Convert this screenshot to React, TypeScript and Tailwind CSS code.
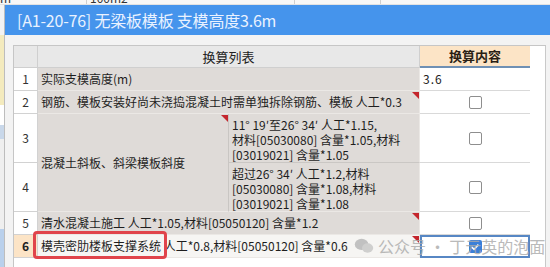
import React from "react";

// 换算列表 rows
const SUB3 = ["11° 19′至26° 34′ 人工*1.15,", "材料[05030080] 含量*1.05,材料", "[03019021] 含量*1.05"];
const SUB4 = ["超过26° 34′ 人工*1.2,材料", "[05030080] 含量*1.08,材料", "[03019021] 含量*1.08"];

function Flag() {
  return (
    <svg viewBox="0 0 7 7" className="absolute right-0 top-[1px] w-[7px] h-[7px]">
      <polygon points="0,0 7,0 7,7" fill="#c4262d" />
    </svg>
  );
}

function Box({ checked }: { checked?: boolean }) {
  if (checked)
    return (
      <span className="w-[13px] h-[13px] rounded-[2px] bg-[#3b7fd8] grid place-items-center">
        <svg viewBox="0 0 10 10" className="w-[10px] h-[10px]">
          <path d="M1.8 5.2 4.1 7.4 8.4 2.6" stroke="white" strokeWidth="1.6" fill="none" />
        </svg>
      </span>
    );
  return <span className="w-[13px] h-[13px] rounded-[2px] border border-[#8e8e8e] bg-white" />;
}

const num = "border-r border-b border-[#d2d2d2] bg-white flex items-center justify-center text-[12px] text-[#333]";
const txt = "relative border-r border-b border-[#ebe8e5] bg-[#dfdbd8] flex items-center pl-[3px] text-[12px] text-[#1e1e1e] whitespace-nowrap";
const val = "border-b border-[#d9d9d9] bg-white flex items-center justify-center";

export default function App() {
  return (
    <div className="relative w-[550px] h-[267px] overflow-hidden bg-white flex flex-col font-['Noto_Sans_CJK_SC','Microsoft_YaHei',sans-serif]">
      {/* window behind */}
      <div className="h-[5px] flex bg-[#f7f7f7] border-b border-[#e2e2e2] text-[12px] leading-[12px] text-[#333] overflow-hidden">
        <div className="w-[87px] border-r border-[#cfcfcf] -mt-[8px]">m</div>
        <div className="w-[208px] border-r border-[#cfcfcf] pl-[3px] -mt-[8px]">100m2</div>
        <div className="w-[86px] border-r border-[#cfcfcf]" />
      </div>
      <div className="flex flex-1">
        <div className="w-[4px] flex flex-col bg-[#eeeeee]">
          <div className="h-[30px] bg-[#f3f3f3]" />
          <div className="h-[70px] bg-[#f4ebbe]" />
          <div className="h-[20px] bg-white" />
          <div className="h-[14px] bg-[#c9d8ea]" />
          <div className="h-[90px] bg-[#efefef]" />
          <div className="flex-1 bg-[#b9d0ec]" />
        </div>

        {/* dialog */}
        <div className="flex-1 flex flex-col border-l border-[#bdbdbd]">
          <div className="h-[30px] bg-[#4594ec] flex items-center pl-[12px] text-[16px] text-[#eaf2ff] tracking-[-0.2px]">
            [A1-20-76] 无梁板模板 支模高度3.6m
          </div>
          <div className="flex-1 flex flex-col bg-[#f3f3f3] pt-[10px] pl-[8px] pr-[4px]">
            <div className="flex-1 flex bg-white border-t border-l border-[#c6c6c6]">
              <div className="grid grid-cols-[24px_191px_191px_110px] grid-rows-[22px_23px_23px_49px_49px_23px_23px] self-start">
                {/* header */}
                <div className="border-r border-b border-[#cfcfcf] bg-[#e8e8e8]" />
                <div className="col-span-2 border-r border-b border-[#cfcfcf] bg-[#e8e8e8] flex items-center justify-center text-[13px] text-[#222]">
                  换算列表
                </div>
                <div className="bg-[#fce4c6] border-b-2 border-[#6f90b4] flex items-center justify-center text-[13px] font-bold text-[#2a1f14]">
                  换算内容
                </div>

                {/* 1 */}
                <div className={num}>1</div>
                <div className={`${txt} col-span-2`}>实际支模高度(m)</div>
                <div className="border-b border-[#d9d9d9] bg-white flex items-center pl-[3px] text-[12px] text-[#222] tracking-[1px]">3.6</div>

                {/* 2 */}
                <div className={num}>2</div>
                <div className={`${txt} col-span-2`}>
                  钢筋、模板安装好尚未浇捣混凝土时需单独拆除钢筋、模板 人工*0.3
                  <Flag />
                </div>
                <div className={val}><Box /></div>

                {/* 3 + 4 */}
                <div className={num}>3</div>
                <div className={`${txt} row-span-2 border-r-[#c9c6c3]`}>
                  混凝土斜板、斜梁模板斜度
                  <Flag />
                </div>
                <div className={`${txt} border-b-[#cac7c4] items-start pt-[3px] flex-col leading-[15px]`}>
                  {SUB3.map((l) => <span key={l}>{l}</span>)}
                </div>
                <div className={val}><Box /></div>

                <div className={num}>4</div>
                <div className={`${txt} items-start pt-[3px] flex-col leading-[15px]`}>
                  {SUB4.map((l) => <span key={l}>{l}</span>)}
                </div>
                <div className={val}><Box /></div>

                {/* 5 */}
                <div className={num}>5</div>
                <div className={`${txt} col-span-2`}>
                  清水混凝土施工 人工*1.05,材料[05050120] 含量*1.2
                  <Flag />
                </div>
                <div className={val}><Box /></div>

                {/* 6 selected */}
                <div className="border-r border-b border-[#d2d2d2] bg-[#fce4c6] flex items-center justify-center text-[12px] font-bold text-[#222]">6</div>
                <div className={`${txt} col-span-2 bg-[#f6f5f3]`}>
                  模壳密肋楼板支撑系统 人工*0.8,材料[05050120] 含量*0.6
                  <Flag />
                </div>
                <div className="border-2 border-[#5787c4] bg-white flex items-center justify-center">
                  <Box checked />
                </div>
              </div>
              <div className="flex-1 border-r border-[#c9c9c9]" />
            </div>
          </div>
        </div>
      </div>

      {/* red highlight round 模壳密肋楼板支撑系统 */}
      <div className="absolute left-[33px] top-[231px] w-[134px] h-[28px] rounded-[4px] border-[3px] border-[#e0444b]" />

      {/* watermark */}
      <div className="absolute left-[354px] top-[234px] flex items-center gap-[4px] text-[16px] text-[#a9a9a9] opacity-80 whitespace-nowrap">
        <svg viewBox="0 0 24 20" className="w-[20px] h-[16px]" fill="#b5b5b5">
          <ellipse cx="9" cy="8" rx="8.5" ry="7" />
          <ellipse cx="16.5" cy="12.5" rx="7" ry="5.8" fill="#c6c6c6" />
        </svg>
        <span>公众号 · 丁元英的泡面</span>
      </div>
    </div>
  );
}
